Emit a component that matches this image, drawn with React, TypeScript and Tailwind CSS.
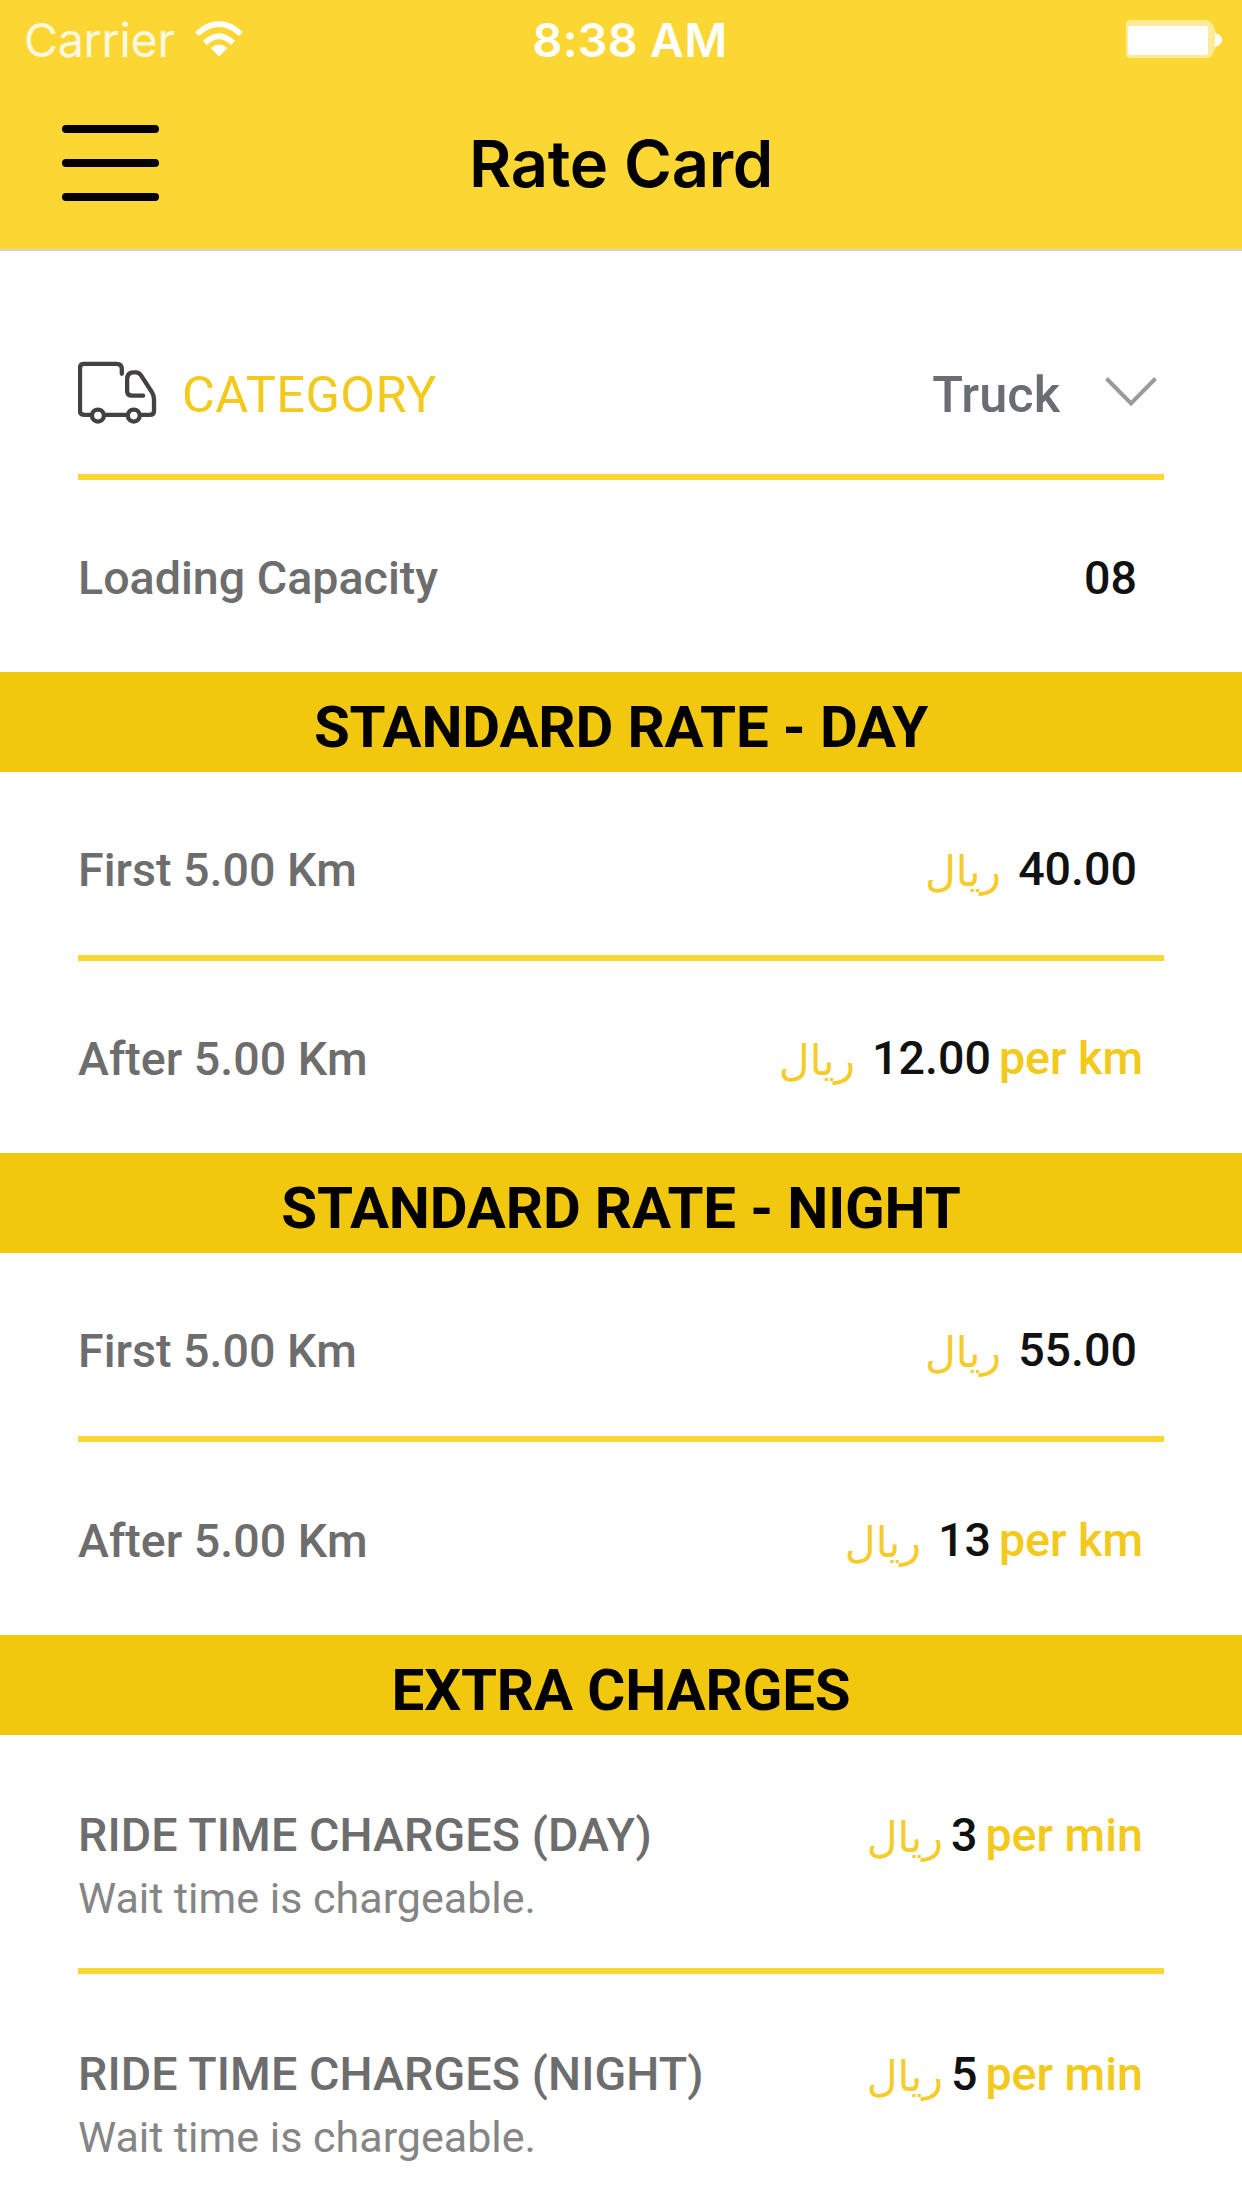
import type { ReactNode } from 'react';
import { clsx } from 'clsx';

type Charge = {
  label: string;
  note?: string;
  amount: string;
  unit?: string;
};

type Section = {
  title: string;
  charges: Charge[];
};

const SECTIONS: Section[] = [
  {
    title: 'STANDARD RATE - DAY',
    charges: [
      { label: 'First 5.00 Km', amount: '40.00' },
      { label: 'After 5.00 Km', amount: '12.00', unit: 'per km' },
    ],
  },
  {
    title: 'STANDARD RATE - NIGHT',
    charges: [
      { label: 'First 5.00 Km', amount: '55.00' },
      { label: 'After 5.00 Km', amount: '13', unit: 'per km' },
    ],
  },
  {
    title: 'EXTRA CHARGES',
    charges: [
      { label: 'RIDE TIME CHARGES (DAY)', note: 'Wait time is chargeable.', amount: '3', unit: 'per min' },
      { label: 'RIDE TIME CHARGES (NIGHT)', note: 'Wait time is chargeable.', amount: '5', unit: 'per min' },
    ],
  },
];

export default function App() {
  return (
    <div className="h-[2208px] w-[1242px] overflow-hidden bg-white font-['Roboto',sans-serif] text-[46.6px] font-medium text-[#6d6d6d]">
      <header className="h-[251px] border-b-2 border-[#d3d1d0] bg-[#fcd632]">
        <StatusBar />
        <div className="grid h-[170px] grid-cols-[1fr_auto_1fr] items-center">
          <button aria-label="Menu" className="ml-[62px] flex w-[97px] flex-col gap-[26px]">
            <span className="h-2 rounded-full bg-black" />
            <span className="h-2 rounded-full bg-black" />
            <span className="h-2 rounded-full bg-black" />
          </button>
          <h1 className="font-['Inter',sans-serif] text-[65px] leading-none font-semibold tracking-[-0.3px] text-black">Rate Card</h1>
        </div>
      </header>

      <main>
        <div className="flex h-[223px] items-center px-[78px] pt-[61px] text-[50.5px]">
          <TruckIcon />
          <span className="ml-[25px] flex-1 pt-1 font-normal tracking-[0.5px] text-[#f3c91c]">CATEGORY</span>
          <span className="pt-1 text-[#6a6d74]">Truck</span>
          <ChevronIcon />
        </div>
        <Divider />
        <div className="flex h-[192px] items-center justify-between pt-1.5 pr-[105px] pl-[78px]">
          <span>Loading Capacity</span>
          <span className="text-[#111]">08</span>
        </div>

        {SECTIONS.map((s, i) => (
          <section key={s.title}>
            <SectionTitle>{s.title}</SectionTitle>
            <ChargeRow charge={s.charges[0]} className={s.charges[0].note ? 'h-[233px]' : 'h-[183px] pt-3'} />
            <Divider />
            <ChargeRow charge={s.charges[1]} className={s.charges[1].note ? 'h-[233px]' : i === 0 ? 'h-[192px] pt-1' : 'h-[193px] pt-1'} />
          </section>
        ))}
      </main>
    </div>
  );
}

function StatusBar() {
  return (
    <div className="grid h-[78px] grid-cols-[1fr_auto_1fr] items-center pt-0.5 pr-[19px] pl-[24px] font-['Inter',sans-serif] leading-none text-white">
      <div className="flex items-center gap-[20px]">
        <span className="font-normal tracking-[-0.3px] opacity-85">Carrier</span>
        <WifiIcon />
      </div>
      <span className="ml-[13px] font-semibold tracking-[0.3px]">8:38 AM</span>
      <BatteryIcon />
    </div>
  );
}

function SectionTitle({ children }: { children: ReactNode }) {
  return (
    <h2 className="flex h-[100px] items-center justify-center bg-[#f2c80f] pt-2.5 text-[58.2px] leading-none font-bold tracking-[-0.15px] text-black">
      {children}
    </h2>
  );
}

function ChargeRow({ charge, className }: { charge: Charge; className?: string }) {
  const { label, note, amount, unit } = charge;
  return (
    <div className={clsx('flex justify-between pl-[78px]', note ? 'items-start pt-[69px]' : 'items-center', unit ? 'pr-[99px]' : 'pr-[105px]', className)}>
      <div>
        <p className={clsx('leading-[62px]', note && 'tracking-[0.1px]')}>{label}</p>
        {note && <p className="text-[43px] leading-[64px] font-normal text-[#858585]">{note}</p>}
      </div>
      <div className="flex items-baseline leading-[62px]">
        <span
          lang="ar"
          dir="rtl"
          className={clsx("translate-y-px font-['DejaVu_Sans',sans-serif] text-[42.5px] font-normal text-[#f5cc2a]", note ? 'mr-[8px]' : 'mr-[17px]')}
        >
          ريال
        </span>
        <span className="text-[#111]">{amount}</span>
        {unit && <span className="ml-2 text-[#f3c91c]">{unit}</span>}
      </div>
    </div>
  );
}

function Divider() {
  return <div className="mx-[78px] h-1.5 bg-[#fcd632]" />;
}

function TruckIcon() {
  return (
    <svg viewBox="54 30 238 192" className="h-16 w-[79px] shrink-0" fill="none" stroke="#454042" strokeWidth="13" strokeLinecap="round" strokeLinejoin="round">
      <path d="M92 192H74Q60 192 60 180V50Q60 38 72 38H170Q186 38 186 54V68" />
      <path d="M250 134H216Q202 134 202 120V86Q202 64 222 64H228Q238 64 244 73L277 124Q283 133 283 146V180Q283 192 270 192H246" />
      <path d="M138 192H198" />
      <circle cx="114" cy="194" r="18" />
      <circle cx="222" cy="194" r="18" />
    </svg>
  );
}

function ChevronIcon() {
  return (
    <svg viewBox="0 0 52 30" className="mr-[7px] mb-0.5 ml-[45px] h-[30px] w-[52px]" fill="none" stroke="#9a9a9a" strokeWidth="4">
      <path d="M1.5 1.5L26 26.5L50.5 1.5" />
    </svg>
  );
}

function WifiIcon() {
  return (
    <svg viewBox="0 0 48 36" className="mb-0.5 h-9 w-12" fill="none" stroke="#fff" strokeWidth="5.5">
      <path d="M2 13Q24 -7 46 13" />
      <path d="M10 22Q24 8.500 38 22" />
      <path d="M24 35.500L15.500 27Q24 20 32.500 27Z" fill="#fff" stroke="none" />
    </svg>
  );
}

function BatteryIcon() {
  return (
    <svg viewBox="0 0 97 38" className="mb-0.5 h-[38px] w-[97px] justify-self-end" fill="#fff">
      <path d="M4 0H82Q88 3 90 14V25Q88 34 83 38H4Q0 38 0 34V4Q0 0 4 0Z" opacity="0.5" />
      <rect x="2" y="6" width="80" height="29" rx="2" />
      <path d="M89 13Q96 15 96 20T89 27Z" />
    </svg>
  );
}
